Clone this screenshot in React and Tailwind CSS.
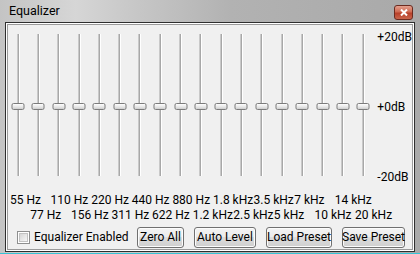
import React from 'react';

const row1 = ['55 Hz', '110 Hz', '220 Hz', '440 Hz', '880 Hz', '1.8 kHz', '3.5 kHz', '7 kHz', '14 kHz'];
const row2 = ['77 Hz', '156 Hz', '311 Hz', '622 Hz', '1.2 kHz', '2.5 kHz', '5 kHz', '10 kHz', '20 kHz'];

function Slider() {
  return (
    <div className="relative flex h-[142px] justify-center">
      <div className="h-full w-[3px] border-r border-white bg-[#a8a8a8] shadow-[inset_1px_0_0_#c9c9c9]" />
      <div className="absolute top-[69px] left-1/2 h-[7px] w-[13px] -translate-x-1/2 rounded-[2px] border border-[#7b7b7b] bg-[linear-gradient(#fdfdfd,#e6e6e6_60%,#cfcfcf)]" />
    </div>
  );
}

function Button({ label, width }) {
  return (
    <div
      className={`flex h-[21px] ${width} items-center justify-center whitespace-nowrap rounded-[3px] border border-[#707070] bg-[linear-gradient(#f3f3f3,#ebebeb_50%,#dddddd_50%,#cfcfcf)] text-[12px] shadow-[inset_0_0_0_1px_#fcfcfc]`}
    >
      {label}
    </div>
  );
}

export default function App() {
  return (
    <div className="flex h-[254px] w-[420px] flex-col border-b border-[#35c4d6] bg-[linear-gradient(to_right,#c4c4c4,#d6d6d6_18%,#c9c9c9_30%,#b2b2b2_55%,#a9a9a9)] font-['Roboto',sans-serif] text-black">
      <div className="relative flex h-[22px] items-center pl-[9px] pt-[1px] text-[12.5px]">
        Equalizer
        <div className="absolute top-[5px] left-[394px] flex h-[15px] w-[19px] items-center justify-center rounded-[3px] border border-[#6b2b20] bg-[linear-gradient(#e3a08f,#cf6a52_45%,#b8402a_55%,#c9654c)]">
          <svg width="8" height="7" viewBox="0 0 8 7">
            <path d="M1 0.5 L7 6.5 M7 0.5 L1 6.5" stroke="white" strokeWidth="2" />
          </svg>
        </div>
      </div>
      <div className="mx-[5px] mb-[1px] flex flex-1 flex-col border border-[#2e2e2e]">
        <div className="flex flex-1 flex-col border border-white">
          <div className="flex flex-1 flex-col border border-[#9a9a9a] bg-[#f0f0f0] text-[12px] leading-[15px]">
            <div className="mt-[9px] flex">
              <div className="grid grid-cols-[repeat(18,20.3px)]">
                {Array.from({ length: 18 }).map((_, i) => (
                  <Slider key={i} />
                ))}
              </div>
              <div className="-mt-[4px] flex h-[154px] flex-col justify-between pl-[4px] leading-[14px]">
                <span>+20dB</span>
                <span>+0dB</span>
                <span>-20dB</span>
              </div>
            </div>
            <div className="mt-[9px] grid grid-cols-[repeat(18,20.3px)] grid-rows-[15px_15px] whitespace-nowrap">
              {row1.map((t, i) => (
                <span key={t} className="col-span-2 row-start-1 pl-[2px]" style={{ gridColumnStart: i * 2 + 1 }}>
                  {t}
                </span>
              ))}
              {row2.map((t, i) => (
                <span key={t} className="col-span-2 row-start-2 pl-[2px]" style={{ gridColumnStart: i * 2 + 2 }}>
                  {t}
                </span>
              ))}
            </div>
            <div className="mt-[4px] flex items-center">
              <div className="flex w-[129px] items-center pl-[9px]">
                <div className="flex h-[13px] w-[13px] items-center justify-center border border-[#8e8f8f] bg-white">
                  <div className="h-[9px] w-[9px] border border-[#c2c2c2] bg-[linear-gradient(135deg,#d6d6d6,#f6f6f6)]" />
                </div>
                <span className="ml-[4px] whitespace-nowrap">Equalizer Enabled</span>
              </div>
              <div className="flex gap-[10px]">
                <Button label="Zero All" width="w-[47px]" />
                <Button label="Auto Level" width="w-[62px]" />
                <Button label="Load Preset" width="w-[66px]" />
                <Button label="Save Preset" width="w-[63px]" />
              </div>
            </div>
          </div>
        </div>
      </div>
    </div>
  );
}
